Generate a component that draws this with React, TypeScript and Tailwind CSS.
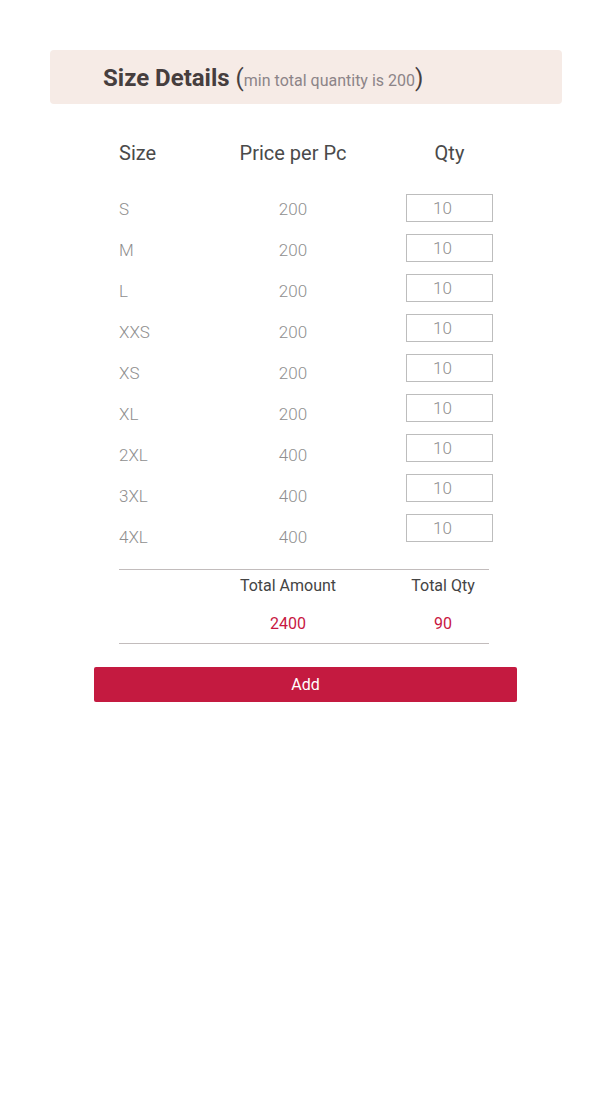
import { useState } from "react";

const rows = [
  { size: "S", price: 200 },
  { size: "M", price: 200 },
  { size: "L", price: 200 },
  { size: "XXS", price: 200 },
  { size: "XS", price: 200 },
  { size: "XL", price: 200 },
  { size: "2XL", price: 400 },
  { size: "3XL", price: 400 },
  { size: "4XL", price: 400 },
];

export default function App() {
  const [qty, setQty] = useState<string[]>(rows.map(() => "10"));

  return (
    <div className="min-h-[1107px] bg-white pt-[50px] font-['Roboto',sans-serif]">
      <div className="mx-[50px] h-[54px] rounded-sm bg-[#f6ebe6] pl-[53px] flex items-center">
        <h1 className="text-[24px] font-bold text-[#463e3e] leading-none pt-[1px]">
          Size Details{" "}
          <span className="font-normal text-[24px] text-[#463e3e]">(</span>
          <span className="font-normal text-[16px] text-[#8c8488]">min total quantity is 200</span>
          <span className="font-normal text-[24px] text-[#463e3e]">)</span>
        </h1>
      </div>

      <div className="mt-[37px] pl-[119px] flex">
        <div className="w-[100px]">
          <div className="h-[24px] text-[20px] leading-[24px] text-[#4a4a4a]">Size</div>
          <div className="mt-[24px]">
            {rows.map((r) => (
              <div key={r.size} className="h-[41px] flex items-center text-[17px] font-light text-[#8f8f8f]">
                {r.size}
              </div>
            ))}
          </div>
        </div>
        <div className="w-[148px] text-center">
          <div className="h-[24px] text-[20px] leading-[24px] text-[#4a4a4a]">Price per Pc</div>
          <div className="mt-[24px]">
            {rows.map((r) => (
              <div key={r.size} className="h-[41px] flex items-center justify-center text-[17px] font-light text-[#8f8f8f]">
                {r.price}
              </div>
            ))}
          </div>
        </div>
        <div className="ml-[39px] w-[87px] text-center">
          <div className="h-[24px] text-[20px] leading-[24px] text-[#4a4a4a]">Qty</div>
          <div className="mt-[29px] flex flex-col gap-[12px]">
            {rows.map((r, i) => (
              <input
                key={r.size}
                value={qty[i]}
                onChange={(e) => {
                  const next = [...qty];
                  next[i] = e.target.value;
                  setQty(next);
                }}
                className="h-[28px] w-[87px] border border-[#bdbdbd] pr-[14px] text-center text-[17px] font-light text-[#8f8f8f] outline-none"
              />
            ))}
          </div>
        </div>
      </div>

      <div className="ml-[119px] mt-[11px] w-[370px]">
        <div className="h-px bg-[#c2bcbc]" />
        <div className="flex pt-[6px] text-[16px] leading-[20px] text-[#444]">
          <div className="w-[100px]" />
          <div className="w-[138px] text-center">Total Amount</div>
          <div className="ml-[43px] w-[86px] text-center">Total Qty</div>
        </div>
        <div className="flex pt-[18px] text-[16px] leading-[20px] text-[#c8173f]">
          <div className="w-[100px]" />
          <div className="w-[138px] text-center">2400</div>
          <div className="ml-[43px] w-[86px] text-center">90</div>
        </div>
        <div className="mt-[9px] h-px bg-[#c2bcbc]" />
      </div>

      <button className="ml-[94px] mt-[23px] h-[35px] w-[423px] rounded-[2px] bg-[#c41a40] text-[16px] text-white">
        Add
      </button>
    </div>
  );
}
